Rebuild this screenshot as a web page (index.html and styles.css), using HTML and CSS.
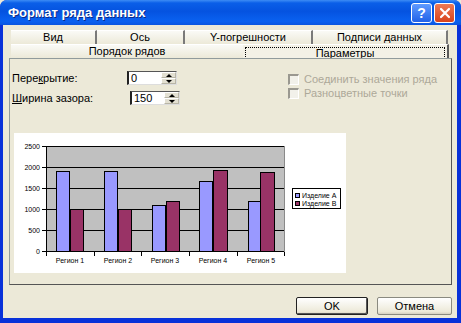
FILE: index.html
```html
<!DOCTYPE html>
<html lang="ru">

<head>
    <meta charset="UTF-8">
    <title>Формат ряда данных</title>
    <link rel="stylesheet" href="styles.css">
</head>

<body>
    <div class="window">
        <div class="titlebar">
            <span class="title">Формат ряда данных</span>
            <div class="caption-btns">
                <span class="cap-btn help">?</span>
                <span class="cap-btn close">
                    <svg width="12" height="12" viewBox="0 0 12 12">
                        <path d="M2 2 L10 10 M10 2 L2 10" stroke="#fff" stroke-width="2.2" stroke-linecap="round"/>
                    </svg>
                </span>
            </div>
        </div>

        <div class="client">
            <div class="tab-row row-back">
                <div class="tab t-vid">Вид</div>
                <div class="tab t-os">Ось</div>
                <div class="tab t-err">Y-погрешности</div>
                <div class="tab t-labels">Подписи данных</div>
            </div>
            <div class="tab-row row-front">
                <div class="tab t-order">Порядок рядов</div>
                <div class="tab t-params active"><span class="focus">Параметры</span></div>
            </div>

            <div class="panel">
                <div class="options">
                    <div class="fields">
                        <div class="field">
                            <label>Пере<u>к</u>рытие:</label>
                            <div class="spin">
                                <span class="val">0</span>
                                <span class="spin-btns"><i class="up"></i><i class="down"></i></span>
                            </div>
                        </div>
                        <div class="field field-gap">
                            <label><u>Ш</u>ирина зазора:</label>
                            <div class="spin">
                                <span class="val">150</span>
                                <span class="spin-btns"><i class="up"></i><i class="down"></i></span>
                            </div>
                        </div>
                    </div>
                    <div class="checks">
                        <div class="check"><span class="box"></span>Соединить значения ряда</div>
                        <div class="check"><span class="box"></span>Разноцветные точки</div>
                    </div>
                </div>

                <div class="chart">
                    <svg width="332" height="140" viewBox="0 0 332 140" shape-rendering="crispEdges">
                        <!-- plot area -->
                        <rect x="32" y="13" width="239" height="106" fill="#c0c0c0"/>
                        <g stroke="#000" stroke-width="1">
                            <line x1="28" y1="13.5" x2="271" y2="13.5"/>
                            <line x1="28" y1="34.5" x2="271" y2="34.5"/>
                            <line x1="28" y1="55.5" x2="271" y2="55.5"/>
                            <line x1="28" y1="76.5" x2="271" y2="76.5"/>
                            <line x1="28" y1="97.5" x2="271" y2="97.5"/>
                            <line x1="28" y1="118.5" x2="271" y2="118.5"/>
                            <line x1="32.5" y1="13" x2="32.5" y2="119"/>
                            <line x1="32.5" y1="119" x2="32.5" y2="123"/>
                            <line x1="80.5" y1="119" x2="80.5" y2="123"/>
                            <line x1="127.5" y1="119" x2="127.5" y2="123"/>
                            <line x1="175.5" y1="119" x2="175.5" y2="123"/>
                            <line x1="223.5" y1="119" x2="223.5" y2="123"/>
                            <line x1="270.5" y1="119" x2="270.5" y2="123"/>
                        </g>
                        <line x1="270.5" y1="13" x2="270.5" y2="119" stroke="#8a8a8a"/>

                        <!-- bars -->
                        <g stroke="#000" stroke-width="1">
                            <rect x="42.5" y="38.5" width="13" height="80" fill="#9999ff"/>
                            <rect x="56.5" y="76.5" width="13" height="42" fill="#993366"/>
                            <rect x="90.5" y="38.5" width="13" height="80" fill="#9999ff"/>
                            <rect x="104.5" y="76.5" width="13" height="42" fill="#993366"/>
                            <rect x="138.5" y="72.5" width="13" height="46" fill="#9999ff"/>
                            <rect x="152.5" y="68.5" width="13" height="50" fill="#993366"/>
                            <rect x="185.5" y="48.5" width="13" height="70" fill="#9999ff"/>
                            <rect x="199.5" y="37.5" width="14" height="81" fill="#993366"/>
                            <rect x="234.5" y="68.5" width="12" height="50" fill="#9999ff"/>
                            <rect x="246.5" y="39.5" width="14" height="79" fill="#993366"/>
                        </g>

                        <!-- axis labels -->
                        <g class="axis-text" text-anchor="end">
                            <text x="26" y="16">2500</text>
                            <text x="26" y="37">2000</text>
                            <text x="26" y="58">1500</text>
                            <text x="26" y="79">1000</text>
                            <text x="26" y="100">500</text>
                            <text x="26" y="121">0</text>
                        </g>
                        <g class="axis-text" text-anchor="middle">
                            <text x="56" y="130">Регион 1</text>
                            <text x="104" y="130">Регион 2</text>
                            <text x="151" y="130">Регион 3</text>
                            <text x="199" y="130">Регион 4</text>
                            <text x="247" y="130">Регион 5</text>
                        </g>

                        <!-- legend -->
                        <rect x="278.5" y="55.5" width="48" height="20" fill="#fff" stroke="#000"/>
                        <rect x="281.5" y="60.5" width="4" height="4" fill="#9999ff" stroke="#000"/>
                        <rect x="281.5" y="68.5" width="4" height="4" fill="#993366" stroke="#000"/>
                        <g class="axis-text">
                            <text x="288" y="65">Изделие А</text>
                            <text x="288" y="73">Изделие В</text>
                        </g>
                    </svg>
                </div>
            </div>

            <div class="buttons">
                <button class="btn default">OK</button>
                <button class="btn">Отмена</button>
            </div>
        </div>
    </div>
</body>

</html>
```

FILE: styles.css
```css
body {
    margin: 0;
    padding: 0;
    font-family: "Liberation Sans", Arial, sans-serif;
    font-size: 11px;
    background: #ece9d8;
}

.window {
    width: 461px;
    height: 323px;
    display: flex;
    flex-direction: column;
    background: #0831d9;
    border-radius: 7px 7px 0 0;
    overflow: hidden;
}

/* title bar */
.titlebar {
    height: 25px;
    flex: 0 0 25px;
    display: flex;
    align-items: center;
    justify-content: space-between;
    padding: 0 6px 0 8px;
    background: linear-gradient(to bottom, #3d8cf5 0%, #0a5fe8 12%, #0553e0 45%, #0a61f0 85%, #0a55e0 100%);
}

.title {
    color: #fff;
    font-weight: bold;
    font-size: 13px;
    text-shadow: 1px 1px 0 #0a2a88;
}

.caption-btns {
    display: flex;
    gap: 2px;
    margin-top: 1px;
}

.cap-btn {
    width: 19px;
    height: 18px;
    border: 1px solid #fff;
    border-radius: 3px;
    display: flex;
    align-items: center;
    justify-content: center;
    color: #fff;
    font-weight: bold;
    font-size: 14px;
}

.help {
    background: linear-gradient(to bottom, #5f9bff, #2162e8);
}

.close {
    background: linear-gradient(to bottom, #ee7a55, #d8431c);
}

/* client area */
.client {
    flex: 1;
    display: flex;
    flex-direction: column;
    background: #ece9d8;
    margin: 0 4px 5px 3px;
    padding: 5px 5px 3px 6px;
}

.tab-row {
    display: flex;
    height: 14px;
    margin-left: 2px;
}

.tab {
    box-sizing: border-box;
    height: 14px;
    line-height: 13px;
    text-align: center;
    color: #000;
    background: linear-gradient(to bottom, #fafaf6, #ece9d8);
    border-top: 1px solid #fff;
    border-right: 2px solid #7a7a7a;
}

.t-vid { width: 86px; }
.t-os { width: 88px; }
.t-err { width: 128px; }
.t-labels { width: 135px; }

.t-order {
    width: 232px;
    border-right: none;
}

.t-params {
    width: 206px;
    padding: 2px 2px 0 2px;
    line-height: 10px;
    border-right: 2px solid #5a5a5a;
    background: #f3f1e6;
}

.focus {
    display: block;
    height: 10px;
    border: 1px dotted #000;
}

/* tab panel */
.panel {
    box-sizing: border-box;
    height: 227px;
    border: 1px solid #919b9c;
    border-right-color: #555;
    border-bottom-color: #555;
    padding: 12px 0 0 2px;
}

.options {
    display: flex;
    height: 34px;
}

.fields {
    width: 276px;
    display: flex;
    flex-direction: column;
    gap: 6px;
}

.field {
    display: flex;
    align-items: center;
    height: 14px;
}

.field label {
    width: 115px;
}

.field-gap .spin {
    margin-left: 3px;
}

.spin {
    box-sizing: border-box;
    width: 50px;
    height: 14px;
    display: flex;
    background: #fff;
    border-top: 1px solid #555;
    border-left: 2px solid #222;
    border-bottom: 1px solid #ddd;
    border-right: 1px solid #ddd;
}

.val {
    flex: 1;
    padding-left: 2px;
    line-height: 12px;
}

.spin-btns {
    width: 15px;
    display: flex;
    flex-direction: column;
    background: #e3e0d2;
}

.spin-btns i {
    flex: 1;
    display: flex;
    align-items: center;
    justify-content: center;
    border: 1px solid #b8b5a6;
    border-top-color: #fff;
    border-left-color: #fff;
}

.spin-btns i::before {
    content: "";
    border-left: 3px solid transparent;
    border-right: 3px solid transparent;
}

.up::before {
    border-bottom: 3px solid #000;
}

.down::before {
    border-top: 3px solid #000;
}

.checks {
    padding-top: 1px;
    display: flex;
    flex-direction: column;
}

.check {
    display: flex;
    align-items: center;
    height: 14px;
    color: #aca899;
}

.box {
    box-sizing: border-box;
    width: 11px;
    height: 11px;
    margin-right: 5px;
    background: #f2f1ea;
    border-top: 2px solid #9a9890;
    border-left: 2px solid #9a9890;
    border-right: 1px solid #fff;
    border-bottom: 1px solid #fff;
}

.chart {
    width: 332px;
    height: 140px;
    margin: 28px 0 0 2px;
    background: #fff;
}

.chart svg {
    display: block;
}

.axis-text {
    font-family: "Liberation Sans", Arial, sans-serif;
    font-size: 7px;
    fill: #000;
}

/* dialog buttons */
.buttons {
    display: flex;
    justify-content: flex-end;
    gap: 9px;
    margin-top: 12px;
}

.btn {
    box-sizing: border-box;
    height: 18px;
    width: 75px;
    padding: 0;
    font-family: "Liberation Sans", Arial, sans-serif;
    font-size: 11px;
    color: #000;
    border: 1px solid #8a8a80;
    border-radius: 2px;
    background: linear-gradient(to bottom, #fff, #ece9d8 85%, #d6d0c0);
}

.default {
    width: 72px;
    border: 1px solid #222;
    box-shadow: inset -1px -1px 0 #555;
}
```
